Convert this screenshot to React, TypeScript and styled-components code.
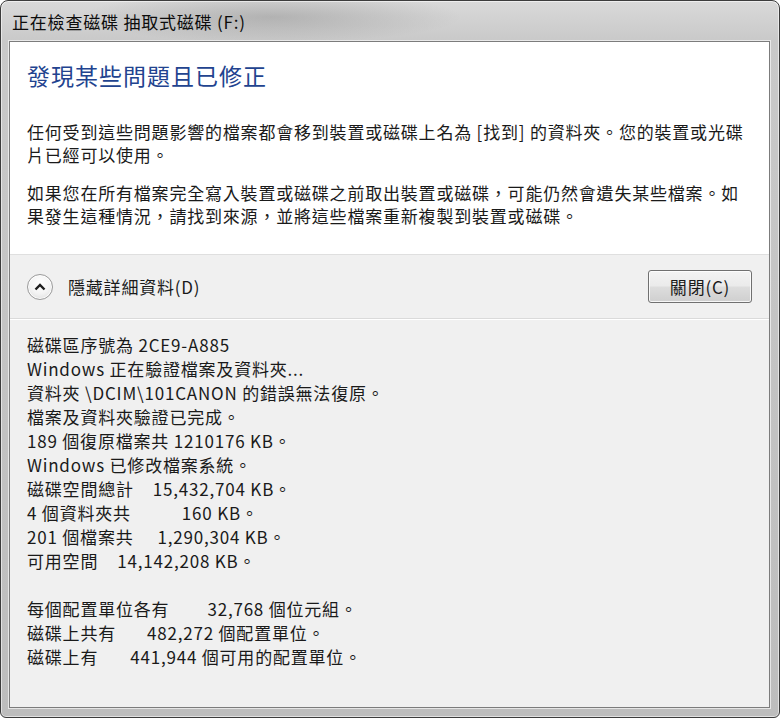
import React from 'react'
import styled, { createGlobalStyle } from 'styled-components'

const GlobalStyle = createGlobalStyle`
  html, body {
    margin: 0;
    padding: 0;
    background: #ffffff;
  }
  body {
    font-family: "Noto Sans CJK TC", "Liberation Sans", sans-serif;
  }
`

const Window = styled.div`
  width: 780px;
  height: 718px;
  box-sizing: border-box;
  display: flex;
  flex-direction: column;
  padding: 0 9px 9px 8px;
  border: 1px solid #3c3c3c;
  border-radius: 8px 8px 6px 6px;
  box-shadow: inset 0 0 0 1px rgba(255, 255, 255, 0.55);
  background:
    radial-gradient(ellipse 190px 26px at 270px 16px, rgba(110, 110, 110, 0.32), transparent),
    linear-gradient(to bottom, #d9d9d9 0, #c9c9c9 40px, #bdbdbd 100%);
`

const TitleBar = styled.div`
  height: 40px;
  display: flex;
  align-items: center;
  padding-left: 3px;
  font-size: 17px;
  letter-spacing: 0.8px;
  color: #0c0c0c;
`

const Client = styled.div`
  flex: 1;
  display: flex;
  flex-direction: column;
  border: 1px solid #7c7c7c;
  box-shadow: 0 0 0 1px rgba(255, 255, 255, 0.6);
  background: #f0f0f0;
  color: #1a1a1a;
  font-size: 17px;
  letter-spacing: 0.8px;
`

const MainPanel = styled.div`
  background: #ffffff;
  padding: 17px 17px 27px 17px;
  border-bottom: 1px solid #dfdfdf;
`

const Heading = styled.h1`
  margin: 0 0 29px 0;
  font-size: 23px;
  line-height: 32px;
  font-weight: 400;
  letter-spacing: 1px;
  color: #22438f;
`

const Paragraph = styled.p`
  margin: 0;
  line-height: 23px;
  white-space: nowrap;

  & + & {
    margin-top: 15px;
  }
`

const ActionBar = styled.div`
  height: 63px;
  display: flex;
  align-items: center;
  justify-content: space-between;
  padding: 0 17px 0 17px;
  border-bottom: 1px solid #dadada;
  box-shadow: 0 1px 0 #ffffff;
`

const Toggle = styled.div`
  display: flex;
  align-items: center;
  gap: 15px;
`

const ChevronButton = styled.div`
  width: 26px;
  height: 26px;
  box-sizing: border-box;
  border-radius: 50%;
  border: 1px solid #9a9a9a;
  box-shadow: inset 0 0 0 1px rgba(255, 255, 255, 0.9);
  background: radial-gradient(circle at 50% 35%, #ffffff 0, #f4f4f4 50%, #d9d9d9 100%);
  display: flex;
  align-items: center;
  justify-content: center;
`

const ToggleLabel = styled.span`
  line-height: 24px;
  margin-top: 1px;
`

const CloseButton = styled.button`
  width: 104px;
  height: 33px;
  border: 1px solid #707070;
  border-radius: 3px;
  box-shadow: inset 0 0 0 1px rgba(255, 255, 255, 0.8);
  background: linear-gradient(to bottom, #f3f3f3 0, #ebebeb 48%, #dddddd 52%, #cfcfcf 100%);
  font-family: inherit;
  font-size: 17px;
  letter-spacing: 0.8px;
  color: #1a1a1a;
  padding: 0;
`

const Details = styled.div`
  padding: 14px 17px 0 17px;
  line-height: 24px;
`

const DetailLine = styled.div`
  height: 24px;
  white-space: pre;
`

const Gap = styled.span<{ $w: number }>`
  display: inline-block;
  width: ${(p) => p.$w}px;
`

interface Detail {
  a: string
  gap?: number
  b?: string
}

const details: Detail[] = [
  { a: '磁碟區序號為 2CE9-A885' },
  { a: 'Windows 正在驗證檔案及資料夾...' },
  { a: '資料夾 \\DCIM\\101CANON 的錯誤無法復原。' },
  { a: '檔案及資料夾驗證已完成。' },
  { a: '189 個復原檔案共 1210176 KB。' },
  { a: 'Windows 已修改檔案系統。' },
  { a: '磁碟空間總計', gap: 19, b: '15,432,704 KB。' },
  { a: '4 個資料夾共', gap: 51, b: '160 KB。' },
  { a: '201 個檔案共', gap: 24, b: '1,290,304 KB。' },
  { a: '可用空間', gap: 19, b: '14,142,208 KB。' },
  { a: '' },
  { a: '每個配置單位各有', gap: 38, b: '32,768 個位元組。' },
  { a: '磁碟上共有', gap: 31, b: '482,272 個配置單位。' },
  { a: '磁碟上有', gap: 32, b: '441,944 個可用的配置單位。' },
]

export default function App() {
  return (
    <>
      <GlobalStyle />
      <Window lang="zh-TW">
        <TitleBar>正在檢查磁碟 抽取式磁碟 (F:)</TitleBar>
        <Client>
          <MainPanel>
            <Heading>發現某些問題且已修正</Heading>
            <Paragraph>
              任何受到這些問題影響的檔案都會移到裝置或磁碟上名為 [找到] 的資料夾。您的裝置或光碟
              <br />
              片已經可以使用。
            </Paragraph>
            <Paragraph>
              如果您在所有檔案完全寫入裝置或磁碟之前取出裝置或磁碟，可能仍然會遺失某些檔案。如
              <br />
              果發生這種情況，請找到來源，並將這些檔案重新複製到裝置或磁碟。
            </Paragraph>
          </MainPanel>
          <ActionBar>
            <Toggle>
              <ChevronButton>
                <svg width="12" height="8" viewBox="0 0 12 8">
                  <path d="M1.5 6.5 L6 2 L10.5 6.5" fill="none" stroke="#1e1e1e" strokeWidth="2.4" />
                </svg>
              </ChevronButton>
              <ToggleLabel>隱藏詳細資料(D)</ToggleLabel>
            </Toggle>
            <CloseButton>關閉(C)</CloseButton>
          </ActionBar>
          <Details>
            {details.map((d, i) => (
              <DetailLine key={i}>
                {d.a}
                {d.gap !== undefined && <Gap $w={d.gap} />}
                {d.b}
              </DetailLine>
            ))}
          </Details>
        </Client>
      </Window>
    </>
  )
}
